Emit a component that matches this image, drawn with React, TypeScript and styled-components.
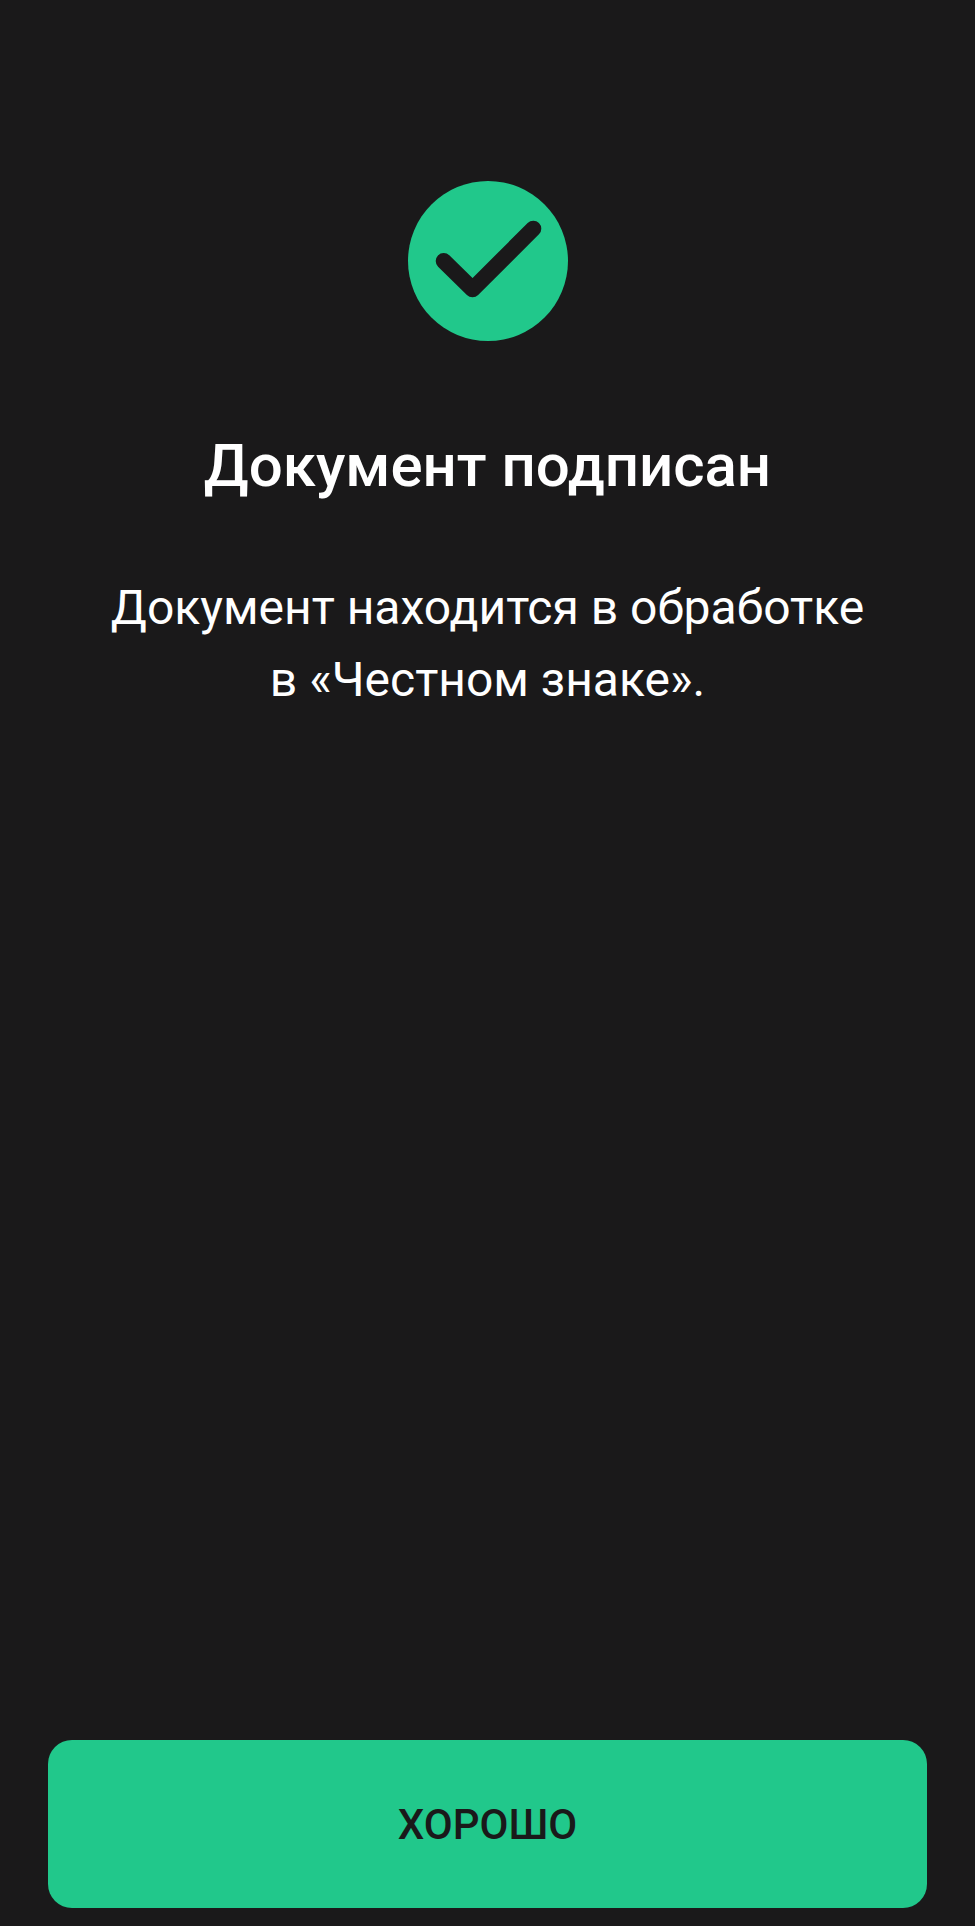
import React from 'react';
import styled, {createGlobalStyle} from 'styled-components';

const GlobalStyle = createGlobalStyle`
  html, body {
    margin: 0;
    padding: 0;
    background-color: #1a191a;
  }
`

const Screen = styled.div`
  height: 1926px;
  box-sizing: border-box;
  padding: 181px 48px 18px;
  background-color: #1a191a;
  display: flex;
  flex-direction: column;
  align-items: center;
  font-family: Roboto, sans-serif;
`

const Badge = styled.svg`
  display: block;
  width: 160px;
  height: 160px;
`

const Title = styled.h1`
  margin: 89px 0 0;
  font-size: 60px;
  line-height: 72px;
  font-weight: 500;
  color: #ffffff;
  text-align: center;
`

const Message = styled.p`
  margin: 70px 0 0;
  font-size: 48px;
  line-height: 72px;
  font-weight: 400;
  color: #ffffff;
  text-align: center;
`

const OkButton = styled.button`
  margin-top: auto;
  width: 100%;
  height: 168px;
  border: 0;
  border-radius: 24px;
  background-color: #21c88b;
  color: #1a191a;
  font-family: inherit;
  font-size: 42px;
  font-weight: 500;
`

export default function App() {
    return (
        <Screen>
            <GlobalStyle/>
            <Badge viewBox="0 0 160 160">
                <circle cx="80" cy="80" r="80" fill="#21c88b"/>
                <path d="M35.7 80 L64.5 108.3 L125.3 47.7" fill="none" stroke="#1a191a" strokeWidth="16"
                      strokeLinecap="round" strokeLinejoin="round"/>
            </Badge>
            <Title>Документ подписан</Title>
            <Message>Документ находится в обработке<br/>в «Честном знаке».</Message>
            <OkButton>ХОРОШО</OkButton>
        </Screen>
    );
}
